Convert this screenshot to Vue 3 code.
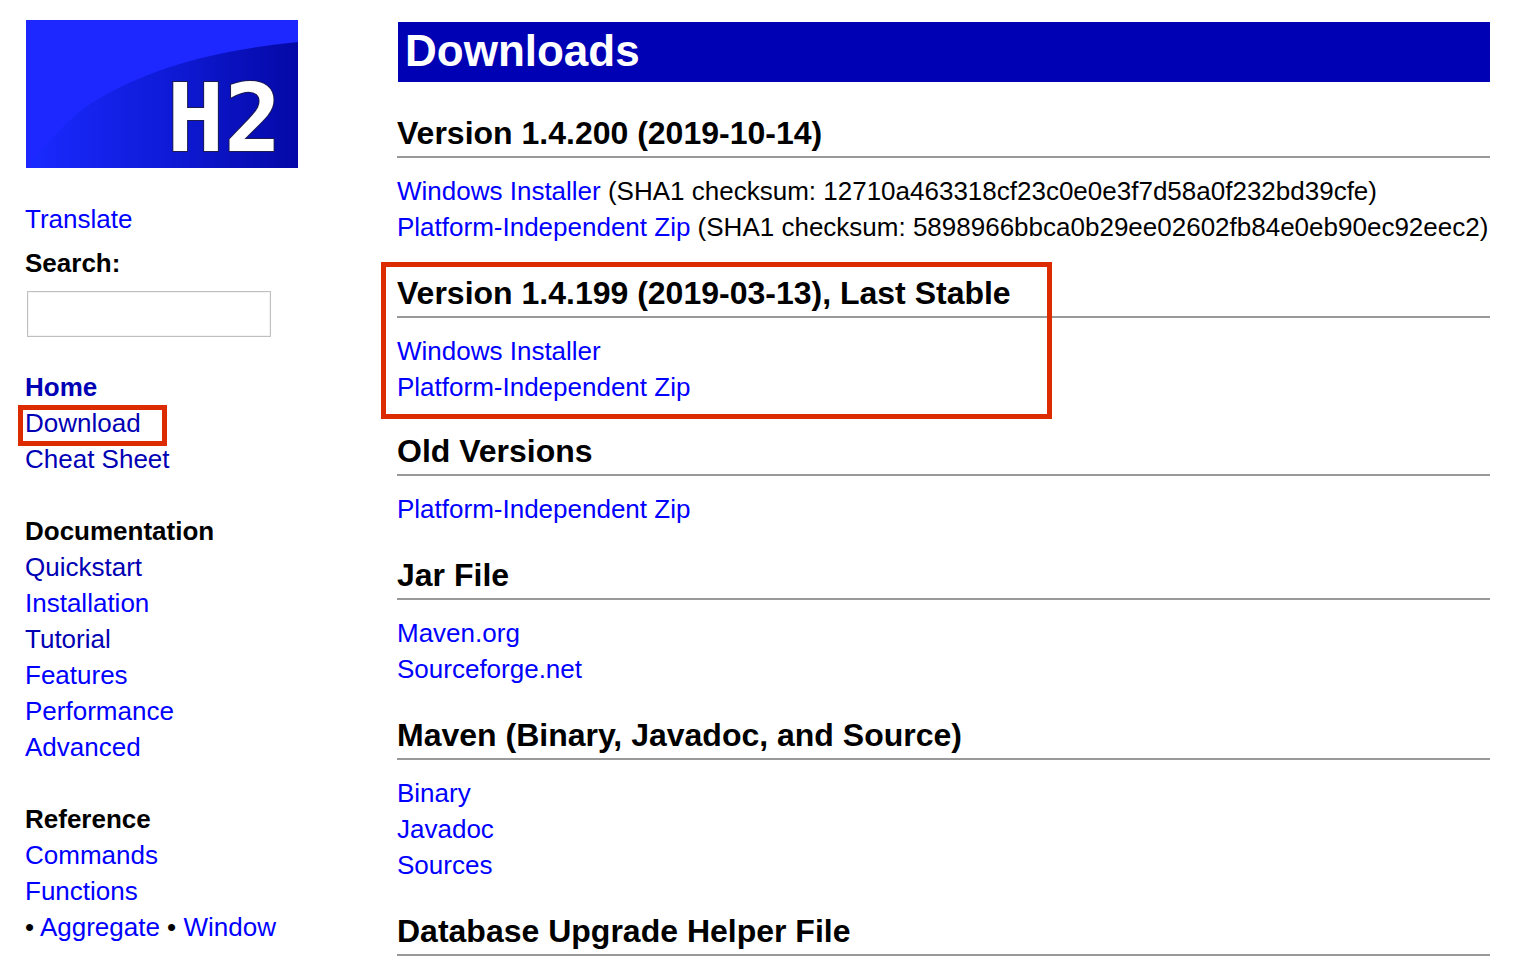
<script setup>
const groups = [
  {
    id: 'home',
    items: [
      { text: 'Home', strong: true, visited: true },
      { text: 'Download', visited: true, marked: true },
      { text: 'Cheat Sheet', visited: true },
    ],
  },
  {
    id: 'documentation',
    title: 'Documentation',
    items: [
      { text: 'Quickstart', visited: true },
      { text: 'Installation' },
      { text: 'Tutorial', visited: true },
      { text: 'Features' },
      { text: 'Performance' },
      { text: 'Advanced' },
    ],
  },
  {
    id: 'reference',
    title: 'Reference',
    items: [{ text: 'Commands' }, { text: 'Functions' }],
    sub: ['Aggregate', 'Window'],
  },
]

const sections = [
  {
    title: 'Version 1.4.200 (2019-10-14)',
    links: [
      { text: 'Windows Installer', note: '(SHA1 checksum: 12710a463318cf23c0e0e3f7d58a0f232bd39cfe)' },
      { text: 'Platform-Independent Zip', note: '(SHA1 checksum: 5898966bbca0b29ee02602fb84e0eb90ec92eec2)' },
    ],
  },
  {
    title: 'Version 1.4.199 (2019-03-13), Last Stable',
    marked: true,
    links: [{ text: 'Windows Installer' }, { text: 'Platform-Independent Zip' }],
  },
  { title: 'Old Versions', links: [{ text: 'Platform-Independent Zip' }] },
  { title: 'Jar File', links: [{ text: 'Maven.org' }, { text: 'Sourceforge.net' }] },
  {
    title: 'Maven (Binary, Javadoc, and Source)',
    links: [{ text: 'Binary' }, { text: 'Javadoc' }, { text: 'Sources' }],
  },
  { title: 'Database Upgrade Helper File', links: [] },
]
</script>

<template>
  <div class="page">
    <aside class="sidebar">
      <svg class="logo" viewBox="0 0 272 148" role="img" aria-label="H2">
        <defs>
          <linearGradient id="hill" x1="0" y1="0" x2="1" y2="0">
            <stop offset="0" stop-color="#1a2aff" />
            <stop offset="0.5" stop-color="#0f1bd8" />
            <stop offset="1" stop-color="#0408a6" />
          </linearGradient>
        </defs>
        <rect width="272" height="148" fill="#1c28ff" />
        <path d="M3 148 C14 131 38 101 67 82 C122 48 190 30 272 22 V148 Z" fill="url(#hill)" />
        <text class="mark" x="141" y="131">H2</text>
      </svg>

      <a class="translate" href="#translate">Translate</a>
      <form class="search" @submit.prevent>
        <label for="search">Search:</label>
        <input id="search" type="text" />
      </form>

      <nav>
        <div v-for="group in groups" :key="group.id" class="group">
          <strong v-if="group.title" class="title">{{ group.title }}</strong>
          <ul>
            <li v-for="item in group.items" :key="item.text" :class="{ marked: item.marked }">
              <a href="#" :class="{ visited: item.visited, strong: item.strong }">{{ item.text }}</a>
            </li>
            <li v-if="group.sub">
              <template v-for="(name, i) in group.sub" :key="name">{{ i ? ' • ' : '• ' }}<a href="#">{{ name }}</a></template>
            </li>
          </ul>
        </div>
      </nav>
    </aside>

    <main>
      <h1>Downloads</h1>
      <section v-for="section in sections" :key="section.title" :class="{ marked: section.marked }">
        <h2>{{ section.title }}</h2>
        <p v-if="section.links.length">
          <span v-for="link in section.links" :key="link.text" class="row">
            <a href="#">{{ link.text }}</a>{{ link.note ? ' ' + link.note : '' }}
          </span>
        </p>
      </section>
    </main>
  </div>
</template>

<style>
body {
  margin: 0;
  background: #fff;
}
</style>

<style scoped>
.page {
  display: flex;
  font: 26px/36px "Liberation Sans", Arial, sans-serif;
  color: #000;
}

a {
  color: #00f;
  text-decoration: none;
}

a.visited {
  color: #0000b4;
}

a.strong {
  font-weight: bold;
}

.sidebar {
  flex: 0 0 397px;
  box-sizing: border-box;
  padding: 20px 0 0 25px;
}

.logo {
  display: block;
  width: 272px;
  height: 148px;
  margin: 0 0 33px 1px;
  overflow: visible;
}

.mark {
  font: bold 95px "DejaVu Sans Mono", monospace;
  fill: #fff;
  stroke: #1c1c50;
  stroke-width: 2px;
  paint-order: stroke;
}

.translate,
.title {
  display: block;
}

.search {
  margin-top: 8px;
}

.search label {
  display: block;
  font-weight: bold;
}

.search input {
  display: block;
  box-sizing: border-box;
  width: 244px;
  height: 46px;
  margin: 10px 0 32px 2px;
  padding: 0 6px;
  border: 1px solid #c0c0c0;
  border-radius: 0;
  box-shadow: inset 0 0 0 1px #f3f3f3;
  background: #fff;
  font: inherit;
  outline: none;
}

.group + .group {
  margin-top: 36px;
}

ul {
  margin: 0;
  padding: 0;
  list-style: none;
}

.marked {
  position: relative;
}

.marked::after {
  content: "";
  position: absolute;
  box-sizing: border-box;
  border: 5px solid #dd2b00;
  pointer-events: none;
}

li.marked::after {
  top: 0;
  left: -7px;
  width: 149px;
  height: 41px;
}

main {
  flex: 1;
  min-width: 0;
  padding: 22px 48px 0 0;
}

h1 {
  margin: 0 0 33px 1px;
  padding: 0 7px 2px;
  background: #0000b4;
  color: #fff;
  font-size: 44px;
  line-height: 58px;
}

section + section {
  margin-top: 30px;
}

section.marked + section {
  margin-top: 28px;
}

section.marked::after {
  top: -13px;
  left: -16px;
  width: 671px;
  height: 157px;
}

h2 {
  margin: 0;
  padding-bottom: 5px;
  border-bottom: 2px solid #999;
  font-size: 32px;
  line-height: 36px;
}

p {
  margin: 15px 0 0;
}

.row {
  display: block;
}
</style>
